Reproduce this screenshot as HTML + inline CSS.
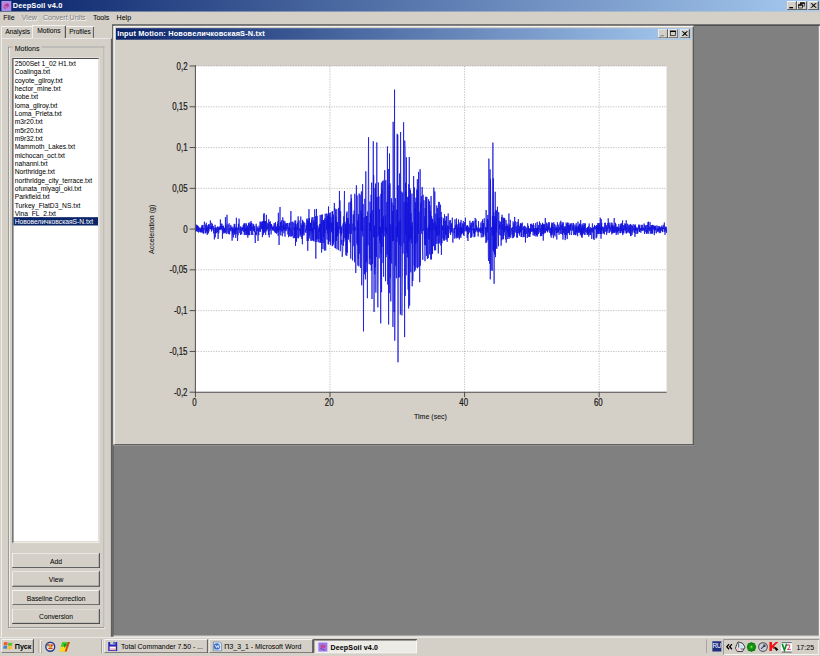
<!DOCTYPE html>
<html><head><meta charset="utf-8"><title>DeepSoil v4.0</title>
<style>
html,body{margin:0;padding:0;width:820px;height:656px;overflow:hidden;background:#d4d0c8}
#s{position:absolute;left:0;top:0;width:1280px;height:1024px;transform:scale(0.640625);transform-origin:0 0;background:#d4d0c8;font-family:"Liberation Sans",sans-serif;font-size:11px;color:#000;overflow:hidden;-webkit-text-stroke:0.05px}
.a{position:absolute}
svg text{font-family:"Liberation Sans",sans-serif}
.cb{width:16px;height:14px;background:#d4d0c8;box-shadow:inset -1px -1px #404040,inset 1px 1px #fff,inset -2px -2px #808080}
.cb svg{position:absolute;left:0;top:0}
.raised{background:#d4d0c8;box-shadow:inset -1px -1px #404040,inset 1px 1px #fff,inset -2px -2px #808080}
.sunk{box-shadow:inset 1px 1px #808080,inset -1px -1px #fff,inset 2px 2px #404040,inset -2px -2px #d4d0c8}
.menu{top:18px;height:19px;line-height:19px;white-space:nowrap}
.dis{color:#808080;text-shadow:1px 1px #fff}
.li{position:absolute;left:2px;right:2px;height:13px;line-height:14px;padding-left:2px;white-space:nowrap;font-size:11px}
.li span{display:inline-block;transform:scaleX(0.95);transform-origin:0 0}
.sel{background:#0a246a;color:#fff}
.btn{left:19px;width:137px;height:24px;line-height:27px;text-align:center;font-size:10.5px}
.tb{height:22px;line-height:22px;white-space:nowrap}
</style></head><body>
<div id="s">
<!-- main title bar -->
<div class="a" style="left:0;top:0;width:1280px;height:18px;background:linear-gradient(to right,#0a246a,#a6caf0)"></div>
<svg class="a" style="left:2px;top:1px" width="16" height="16" viewBox="0 0 16 16"><rect x="0" y="0" width="16" height="16" fill="#a89cf4"/><rect x="1" y="1" width="14" height="14" fill="#b48ce8"/><ellipse cx="8" cy="8" rx="5" ry="4" fill="#c860b8" transform="rotate(-30 8 8)"/><ellipse cx="9" cy="7" rx="2.5" ry="2" fill="#a04098"/><path d="M3.5 10.5 L7 13" stroke="#9050a8" stroke-width="1.5"/></svg>
<div class="a" style="left:20px;top:0;height:18px;line-height:18px;color:#fff;font-weight:bold;font-size:11.5px;letter-spacing:0.2px">DeepSoil v4.0</div>
<div class="a cb" style="left:1228px;top:2px"><svg width="16" height="14"><rect x="4" y="9" width="6" height="2" fill="#000"/></svg></div><div class="a cb" style="left:1244px;top:2px"><svg width="16" height="14"><rect x="5.5" y="2.5" width="6" height="5" fill="none" stroke="#000"/><rect x="5" y="2" width="7" height="2" fill="#000"/><rect x="2.5" y="5.5" width="6" height="5" fill="#d4d0c8" stroke="#000"/><rect x="2" y="5" width="7" height="2" fill="#000"/></svg></div><div class="a cb" style="left:1262px;top:2px"><svg width="16" height="14"><path d="M4 3 L11 10 M11 3 L4 10 M5 3 L12 10 M12 3 L5 10" stroke="#000" stroke-width="1.4"/></svg></div>
<!-- menu -->
<div class="a menu" style="left:5px">File</div>
<div class="a menu dis" style="left:34px">View</div>
<div class="a menu dis" style="left:67px">Convert Units</div>
<div class="a menu" style="left:145px">Tools</div>
<div class="a menu" style="left:182px">Help</div>

<!-- left tab control -->
<div class="a" style="left:2px;top:59px;width:173px;height:940px;box-shadow:inset 1px 1px #fff,inset -1px -1px #404040,inset -2px -2px #808080"></div>
<div class="a" style="left:2px;top:41px;width:49px;height:18px;box-shadow:inset 1px 1px #fff"></div>
<div class="a" style="left:8px;top:40px;height:18px;line-height:19px;font-size:10.5px">Analysis</div>
<div class="a" style="left:102px;top:41px;width:45px;height:18px;box-shadow:inset 1px 1px #fff,inset -1px 0 #404040,inset -2px 0 #808080"></div>
<div class="a" style="left:108px;top:40px;height:18px;line-height:19px;font-size:10.5px;transform:scaleX(0.96);transform-origin:0 0">Profiles</div>
<div class="a" style="left:50px;top:39px;width:53px;height:21px;background:#d4d0c8;box-shadow:inset 1px 1px #fff,inset -1px 0 #404040,inset -2px 0 #808080"></div>
<div class="a" style="left:58px;top:39px;height:18px;line-height:19px;font-size:10.5px">Motions</div>

<!-- group box -->
<div class="a" style="left:13px;top:73px;width:148px;height:905px;border:1px solid #808080;box-shadow:inset 1px 1px #fff,1px 1px #fff"></div>
<div class="a" style="left:20px;top:67px;height:14px;line-height:16px;padding:0 3px;background:#d4d0c8">Motions</div>

<!-- listbox -->
<div class="a" style="left:19px;top:90px;width:136px;height:757px;background:#fff">
<div class="li" style="top:2px"><span>2500Set 1_02 H1.txt</span></div>
<div class="li" style="top:15px"><span>Coalinga.txt</span></div>
<div class="li" style="top:28px"><span>coyote_gilroy.txt</span></div>
<div class="li" style="top:41px"><span>hector_mine.txt</span></div>
<div class="li" style="top:54px"><span>kobe.txt</span></div>
<div class="li" style="top:67px"><span>loma_gilroy.txt</span></div>
<div class="li" style="top:80px"><span>Loma_Prieta.txt</span></div>
<div class="li" style="top:93px"><span>m3r20.txt</span></div>
<div class="li" style="top:106px"><span>m5r20.txt</span></div>
<div class="li" style="top:119px"><span>m9r32.txt</span></div>
<div class="li" style="top:132px"><span>Mammoth_Lakes.txt</span></div>
<div class="li" style="top:145px"><span>michocan_oct.txt</span></div>
<div class="li" style="top:158px"><span>nahanni.txt</span></div>
<div class="li" style="top:171px"><span>Northridge.txt</span></div>
<div class="li" style="top:184px"><span>northridge_city_terrace.txt</span></div>
<div class="li" style="top:197px"><span>ofunata_miyagi_oki.txt</span></div>
<div class="li" style="top:210px"><span>Parkfield.txt</span></div>
<div class="li" style="top:223px"><span>Turkey_FlatD3_NS.txt</span></div>
<div class="li" style="top:236px"><span>Vina_FL_2.txt</span></div>
<div class="li sel" style="top:249px"><span>НововеличковскаяS-N.txt</span></div>
<div class="a sunk" style="left:0;top:0;right:0;bottom:0"></div>
</div>

<div class="a btn raised" style="top:863px">Add</div>
<div class="a btn raised" style="top:892px">View</div>
<div class="a btn raised" style="top:921px">Baseline Correction</div>
<div class="a btn raised" style="top:950px">Conversion</div>

<!-- MDI client -->
<div class="a" style="left:175px;top:38px;width:1105px;height:956px;background:#808080;box-shadow:inset 1px 1px #808080,inset 2px 2px #404040,inset -1px -1px #fff,inset -2px -2px #d4d0c8"></div>

<!-- child window -->
<div class="a" style="left:177px;top:40px;width:906px;height:655px;background:#d4d0c8;box-shadow:inset 1px 1px #d4d0c8,inset -1px -1px #404040,inset 2px 2px #fff,inset -2px -2px #808080"></div>
<div class="a" style="left:181px;top:44px;width:898px;height:18px;background:linear-gradient(to right,#0a246a,#a6caf0)"></div>
<div class="a" style="left:183px;top:43px;height:18px;line-height:18px;color:#fff;font-weight:bold;font-size:11.5px;letter-spacing:0.25px">Input Motion: НововеличковскаяS-N.txt</div>
<div class="a cb" style="left:1027px;top:46px"><svg width="16" height="14"><rect x="5" y="10" width="6" height="2" fill="#fff"/><rect x="4" y="9" width="6" height="2" fill="#808080"/></svg></div><div class="a cb" style="left:1043px;top:46px"><svg width="16" height="14"><rect x="3.5" y="2.5" width="8" height="7" fill="none" stroke="#000" stroke-width="1"/><rect x="3" y="2" width="9" height="2" fill="#000"/></svg></div><div class="a cb" style="left:1061px;top:46px"><svg width="16" height="14"><path d="M4 3 L11 10 M11 3 L4 10 M5 3 L12 10 M12 3 L5 10" stroke="#000" stroke-width="1.4"/></svg></div>
<svg class="a" style="left:0;top:0" width="1280" height="1024" viewBox="0 0 1280 1024">
<rect x="305.0" y="103.0" width="735.5" height="509.2" fill="#fff"/>
<line x1="305.0" y1="103.0" x2="1040.5" y2="103.0" stroke="#a0a0a0" stroke-width="1" stroke-dasharray="2 2"/>
<line x1="305.0" y1="166.7" x2="1040.5" y2="166.7" stroke="#a0a0a0" stroke-width="1" stroke-dasharray="2 2"/>
<line x1="305.0" y1="230.3" x2="1040.5" y2="230.3" stroke="#a0a0a0" stroke-width="1" stroke-dasharray="2 2"/>
<line x1="305.0" y1="294.0" x2="1040.5" y2="294.0" stroke="#a0a0a0" stroke-width="1" stroke-dasharray="2 2"/>
<line x1="305.0" y1="357.6" x2="1040.5" y2="357.6" stroke="#a0a0a0" stroke-width="1" stroke-dasharray="2 2"/>
<line x1="305.0" y1="421.2" x2="1040.5" y2="421.2" stroke="#a0a0a0" stroke-width="1" stroke-dasharray="2 2"/>
<line x1="305.0" y1="484.9" x2="1040.5" y2="484.9" stroke="#a0a0a0" stroke-width="1" stroke-dasharray="2 2"/>
<line x1="305.0" y1="548.6" x2="1040.5" y2="548.6" stroke="#a0a0a0" stroke-width="1" stroke-dasharray="2 2"/>
<line x1="305.0" y1="612.2" x2="1040.5" y2="612.2" stroke="#a0a0a0" stroke-width="1" stroke-dasharray="2 2"/>
<line x1="515.1" y1="103.0" x2="515.1" y2="612.2" stroke="#a0a0a0" stroke-width="1" stroke-dasharray="2 2"/>
<line x1="725.2" y1="103.0" x2="725.2" y2="612.2" stroke="#a0a0a0" stroke-width="1" stroke-dasharray="2 2"/>
<line x1="935.3" y1="103.0" x2="935.3" y2="612.2" stroke="#a0a0a0" stroke-width="1" stroke-dasharray="2 2"/>
<path d="M305.0 357.5 L305.4 361.1 L305.9 350.2 L306.4 360.8 L306.9 351.9 L307.5 360.4 L307.7 352.1 L308.0 361.9 L308.5 352.0 L308.9 358.6 L309.4 357.8 L309.7 353.3 L310.1 363.0 L310.4 355.3 L310.7 362.1 L311.3 355.9 L311.8 359.1 L312.1 355.1 L312.5 362.0 L312.8 361.6 L313.1 356.8 L313.5 362.9 L314.0 357.3 L314.3 362.5 L314.5 354.1 L314.9 362.0 L315.3 351.2 L315.6 363.0 L315.9 363.0 L316.2 353.1 L316.5 358.2 L316.8 351.1 L317.2 364.5 L317.4 361.4 L317.8 356.0 L318.0 364.4 L318.4 362.1 L319.0 346.1 L319.3 350.8 L319.8 358.6 L320.3 356.6 L320.6 364.3 L321.1 350.6 L321.4 363.7 L322.0 347.8 L322.5 361.0 L323.1 352.3 L323.5 366.8 L323.7 355.3 L324.2 364.1 L324.7 351.6 L325.2 364.2 L325.6 350.2 L326.1 361.3 L326.7 350.1 L327.1 356.9 L327.6 357.7 L327.9 353.4 L328.4 344.2 L328.9 357.7 L329.2 354.1 L329.5 357.4 L329.8 352.9 L330.1 361.4 L330.6 347.8 L331.1 357.5 L331.6 349.7 L331.9 357.9 L332.3 357.5 L332.6 359.8 L333.1 353.0 L333.5 364.2 L334.0 356.1 L334.6 373.7 L335.2 364.3 L335.7 350.9 L336.0 370.4 L336.5 355.0 L336.8 364.3 L337.1 357.8 L337.6 355.6 L338.2 363.8 L338.8 354.7 L339.3 362.1 L339.9 353.4 L340.5 373.0 L340.9 354.5 L341.4 364.0 L341.9 361.0 L342.3 354.8 L342.6 358.5 L343.1 353.4 L343.7 358.2 L344.0 342.6 L344.4 357.0 L344.6 353.0 L345.0 359.3 L345.5 349.2 L345.9 357.6 L346.5 349.2 L346.9 354.6 L347.2 372.5 L347.7 352.8 L348.1 361.4 L348.3 362.4 L348.9 352.3 L349.3 364.6 L349.6 355.3 L350.1 363.3 L350.4 356.3 L351.0 363.6 L351.3 356.6 L351.6 357.6 L351.9 339.0 L352.2 362.8 L352.7 350.6 L353.2 365.3 L353.8 351.9 L354.3 335.3 L354.9 349.3 L355.4 362.9 L355.8 364.4 L356.1 350.4 L356.5 360.7 L357.1 365.6 L357.7 348.6 L358.0 357.6 L358.4 365.7 L358.8 356.6 L359.4 359.9 L360.0 354.0 L360.3 351.1 L360.5 361.1 L361.0 353.7 L361.4 357.7 L361.8 355.8 L362.3 375.7 L362.8 356.6 L363.2 366.1 L363.5 353.8 L364.2 370.8 L364.4 356.6 L364.7 363.7 L365.1 361.2 L365.6 349.4 L366.1 366.3 L366.6 350.1 L367.1 362.9 L367.4 355.6 L368.0 371.3 L368.4 354.2 L368.6 365.4 L369.0 339.9 L369.4 360.2 L369.9 355.6 L370.3 363.9 L370.9 376.1 L371.4 355.2 L371.7 367.0 L372.1 349.3 L372.6 358.8 L373.1 341.3 L373.6 349.2 L374.1 363.5 L374.6 362.0 L375.0 354.9 L375.4 366.8 L375.8 353.3 L376.3 358.3 L376.9 356.6 L377.3 365.9 L377.8 354.6 L378.1 360.5 L378.7 355.1 L379.1 358.6 L379.7 351.1 L380.3 362.0 L380.7 348.9 L381.3 367.0 L381.8 348.9 L382.3 364.9 L382.7 348.8 L383.1 360.3 L383.5 357.4 L383.7 366.9 L384.0 355.5 L384.3 359.8 L384.6 348.7 L384.9 367.0 L385.4 353.9 L385.8 365.6 L386.1 359.9 L386.4 352.1 L386.8 371.0 L387.3 355.5 L387.7 367.0 L387.9 348.4 L388.5 366.9 L389.0 347.1 L389.2 366.9 L389.7 366.9 L390.1 350.2 L390.7 359.9 L390.9 348.7 L391.2 360.3 L391.6 345.0 L392.0 345.2 L392.4 366.7 L392.9 347.9 L393.3 358.0 L393.8 353.5 L394.2 363.6 L394.6 366.9 L394.9 349.3 L395.5 360.4 L396.0 350.3 L396.4 359.6 L396.7 355.5 L397.1 362.2 L397.7 352.6 L397.9 368.6 L398.5 379.3 L398.9 361.7 L399.3 366.2 L399.9 349.3 L400.2 366.3 L400.7 367.2 L401.0 353.1 L401.4 360.6 L402.0 357.6 L402.3 355.2 L402.8 376.2 L403.3 356.0 L403.7 363.8 L404.0 366.8 L404.3 352.3 L404.8 361.7 L405.3 355.9 L405.5 357.3 L405.8 346.2 L406.3 349.2 L406.6 361.7 L407.1 346.0 L407.6 356.8 L408.0 347.9 L408.6 357.6 L409.0 345.7 L409.6 370.2 L410.0 345.6 L410.4 360.2 L410.8 345.5 L411.1 366.7 L411.7 334.6 L412.0 363.3 L412.3 332.6 L412.5 363.0 L413.1 345.3 L413.5 352.5 L414.0 361.2 L414.4 345.1 L414.7 366.8 L415.1 345.1 L415.6 357.0 L415.8 335.3 L416.4 361.1 L417.0 353.0 L417.5 357.9 L417.8 347.9 L418.4 352.4 L418.8 349.9 L419.0 366.9 L419.5 342.3 L419.8 357.7 L420.3 370.5 L420.9 346.6 L421.5 360.1 L421.9 345.5 L422.4 356.8 L422.9 349.7 L423.2 366.0 L423.6 349.6 L424.2 356.2 L424.6 351.9 L425.1 359.7 L425.3 354.7 L425.7 359.0 L426.2 354.8 L426.5 358.2 L427.0 353.4 L427.5 360.7 L427.8 348.6 L428.3 360.4 L428.9 361.9 L429.4 348.0 L429.7 363.7 L430.0 346.8 L430.6 362.3 L430.9 353.7 L431.5 364.9 L432.1 353.6 L432.4 363.7 L433.0 349.3 L433.5 360.7 L433.9 345.4 L434.2 368.0 L434.5 332.1 L434.8 361.9 L435.2 356.8 L435.6 382.4 L435.9 368.2 L436.5 353.2 L436.7 358.8 L437.1 323.1 L437.3 358.9 L437.8 346.6 L438.2 367.3 L438.7 348.6 L439.1 361.6 L439.4 344.0 L439.7 354.3 L440.3 353.3 L440.7 368.8 L441.4 339.2 L441.8 360.7 L442.2 350.8 L442.5 357.5 L442.8 344.1 L443.2 364.1 L443.7 354.0 L444.1 358.5 L444.6 345.0 L444.9 369.4 L445.2 347.9 L445.7 359.4 L446.3 350.1 L446.7 360.9 L447.3 348.5 L447.6 357.3 L448.2 356.9 L448.5 357.4 L448.9 348.0 L449.4 366.1 L450.0 353.9 L450.6 370.2 L451.2 348.4 L451.7 361.0 L452.2 347.6 L452.5 368.2 L452.8 355.7 L453.0 369.3 L453.6 344.9 L454.1 329.4 L454.6 351.2 L455.1 369.1 L455.6 346.6 L456.2 368.2 L456.5 368.0 L457.1 345.9 L457.5 370.9 L458.2 371.9 L458.7 347.7 L458.9 358.8 L459.5 354.9 L459.9 371.3 L460.4 344.2 L460.7 371.4 L461.1 348.7 L461.3 383.8 L461.6 344.2 L462.0 366.6 L462.2 349.7 L462.9 377.3 L463.4 353.7 L463.9 371.7 L464.5 347.4 L465.0 359.1 L465.4 337.8 L465.9 371.9 L466.4 349.4 L466.8 344.1 L467.1 360.0 L467.6 356.8 L467.9 368.2 L468.4 369.6 L468.7 357.7 L469.0 365.6 L469.5 338.0 L469.7 367.6 L470.1 350.9 L470.7 351.3 L471.0 372.8 L471.6 348.3 L472.0 381.3 L472.3 343.1 L472.7 368.2 L473.1 345.2 L473.5 364.3 L474.0 347.4 L474.3 367.1 L474.7 367.4 L475.1 358.8 L475.5 347.6 L476.0 349.2 L476.3 357.5 L476.7 362.5 L477.2 357.8 L477.6 363.5 L478.0 351.8 L478.5 359.2 L478.9 341.4 L479.4 376.1 L479.9 344.1 L480.4 391.5 L480.8 341.0 L481.1 376.2 L481.5 345.7 L481.8 360.8 L482.3 326.4 L482.7 372.3 L483.1 340.3 L483.5 367.5 L483.9 347.3 L484.3 360.7 L484.8 348.1 L485.1 375.7 L485.6 348.7 L486.1 360.7 L486.3 342.8 L486.7 376.0 L487.0 339.3 L487.3 363.9 L487.8 355.8 L488.1 374.7 L488.6 338.8 L488.8 366.3 L489.1 376.5 L489.7 344.2 L490.0 376.0 L490.3 347.4 L490.7 358.1 L491.0 345.1 L491.3 326.7 L491.6 354.8 L492.1 377.9 L492.6 337.7 L493.0 403.8 L493.4 344.6 L493.7 374.3 L494.0 326.1 L494.3 349.7 L494.6 377.5 L495.0 337.0 L495.2 371.4 L495.7 373.4 L496.0 351.7 L496.5 354.0 L496.8 377.9 L497.2 378.0 L497.6 356.4 L497.9 372.6 L498.3 354.2 L498.7 362.1 L499.1 349.7 L499.3 379.0 L499.8 335.7 L500.3 378.6 L500.7 349.3 L501.2 374.9 L501.6 335.2 L502.0 394.1 L502.3 344.2 L502.8 379.1 L503.2 334.8 L503.5 344.4 L503.7 358.5 L504.1 388.7 L504.7 343.4 L505.0 370.1 L505.3 343.9 L505.6 379.3 L505.8 346.3 L506.4 391.1 L506.8 341.3 L507.1 364.1 L507.7 333.7 L508.0 375.1 L508.4 390.9 L508.7 368.8 L509.1 340.9 L509.6 358.9 L509.9 333.2 L510.3 370.4 L510.7 374.1 L511.1 337.0 L511.4 364.6 L511.9 334.0 L512.3 381.3 L512.8 322.3 L513.1 381.5 L513.3 336.9 L513.8 376.1 L514.2 333.0 L514.5 357.2 L514.9 346.8 L515.2 377.4 L515.6 331.8 L516.0 382.5 L516.4 373.7 L516.6 338.7 L517.1 362.7 L517.7 347.7 L518.0 360.2 L518.4 330.2 L518.7 384.3 L519.2 329.7 L519.5 383.2 L520.0 346.7 L520.2 381.4 L520.6 335.1 L521.0 377.9 L521.5 328.4 L521.9 316.7 L522.4 328.4 L522.6 325.0 L523.0 387.1 L523.6 327.3 L523.8 387.6 L524.3 338.4 L524.5 375.2 L525.0 345.7 L525.3 375.8 L525.7 326.5 L526.0 389.0 L526.3 351.9 L526.6 368.8 L527.0 346.6 L527.3 367.3 L527.8 355.1 L528.1 390.4 L528.6 324.6 L529.0 364.0 L529.5 333.3 L529.9 298.1 L530.4 357.7 L530.6 312.9 L531.2 392.1 L531.7 329.9 L532.2 367.3 L532.5 353.0 L532.7 365.1 L533.0 355.4 L533.4 382.0 L533.7 374.5 L534.2 400.9 L534.6 394.8 L535.1 391.4 L535.4 350.6 L535.7 363.7 L535.9 347.9 L536.2 383.5 L536.6 337.8 L536.8 377.3 L537.2 326.5 L537.7 298.1 L538.1 371.5 L538.6 346.3 L539.2 373.8 L539.6 349.5 L539.9 398.4 L540.3 357.3 L540.6 393.3 L540.9 333.0 L541.3 399.3 L541.7 330.0 L542.1 394.7 L542.7 340.5 L543.0 370.4 L543.5 340.9 L544.0 373.9 L544.6 316.2 L545.0 365.0 L545.4 355.4 L545.7 351.4 L546.2 349.2 L546.5 378.4 L546.8 314.8 L547.3 366.0 L547.5 403.8 L548.0 303.4 L548.4 365.0 L548.7 309.9 L549.2 332.9 L549.7 336.7 L550.3 406.5 L550.9 349.2 L551.3 359.9 L551.7 334.8 L552.1 372.7 L552.3 384.2 L552.8 328.7 L553.1 384.8 L553.4 409.4 L553.8 302.5 L554.2 360.0 L554.4 354.1 L554.8 393.6 L555.3 426.1 L555.7 413.1 L555.9 312.0 L556.3 289.2 L556.7 314.0 L557.2 380.2 L557.4 305.1 L557.8 382.7 L558.3 343.8 L558.6 414.3 L559.0 347.0 L559.3 404.4 L559.7 334.5 L560.2 415.8 L560.6 302.1 L561.0 370.6 L561.5 396.0 L562.0 303.8 L562.5 307.4 L562.9 418.3 L563.5 328.7 L563.8 360.3 L564.1 298.8 L564.6 445.4 L565.1 333.6 L565.6 361.1 L566.0 287.5 L566.3 368.9 L566.9 318.6 L567.4 517.3 L567.9 360.0 L568.5 339.3 L569.0 428.1 L569.4 310.4 L569.9 319.1 L570.4 436.1 L571.0 267.4 L571.5 424.8 L572.0 337.2 L572.3 409.4 L572.8 337.3 L573.1 378.6 L573.5 465.5 L574.0 330.2 L574.5 383.0 L575.1 239.9 L575.3 214.2 L575.8 349.6 L576.4 412.4 L576.7 347.8 L577.2 403.8 L577.6 314.8 L577.9 361.2 L578.3 332.6 L578.7 413.7 L579.3 304.1 L579.7 422.4 L580.1 285.1 L580.7 466.7 L581.0 328.0 L581.5 412.2 L582.0 398.8 L582.7 220.6 L582.9 370.1 L583.3 273.6 L583.9 487.0 L584.4 352.1 L585.0 428.3 L585.3 293.3 L585.8 417.1 L586.2 286.5 L586.7 456.8 L587.3 308.1 L587.7 400.9 L588.2 222.3 L588.5 370.1 L588.8 307.3 L589.4 447.3 L589.8 479.8 L590.4 428.2 L590.6 284.8 L591.2 367.8 L591.6 306.6 L591.8 403.2 L592.5 326.7 L592.7 375.3 L593.2 353.6 L593.5 379.7 L593.7 354.6 L594.3 504.8 L594.6 302.7 L594.8 396.0 L595.4 285.2 L595.6 456.1 L596.1 295.1 L596.5 385.3 L596.9 282.4 L597.2 364.0 L597.6 342.5 L597.9 410.7 L598.5 337.8 L598.8 432.0 L599.1 281.8 L599.7 369.0 L600.0 281.6 L600.6 265.7 L601.1 360.9 L601.6 336.4 L601.9 438.9 L602.2 281.2 L602.7 401.4 L603.0 354.5 L603.4 365.8 L603.9 315.3 L604.4 397.3 L604.8 228.5 L605.2 444.1 L605.8 333.5 L606.1 263.8 L606.6 506.5 L607.2 288.5 L607.8 457.6 L608.0 239.7 L608.3 405.3 L608.8 286.1 L609.3 433.7 L609.8 350.1 L610.0 470.5 L610.5 369.9 L611.0 309.5 L611.4 411.3 L612.0 316.3 L612.6 376.7 L612.9 329.5 L613.4 510.3 L613.7 190.1 L614.1 375.8 L614.7 320.0 L615.1 487.1 L615.5 385.3 L615.9 139.9 L616.2 531.7 L616.8 435.0 L617.1 383.4 L617.6 309.2 L617.8 414.9 L618.4 353.2 L618.8 434.4 L619.2 327.3 L619.6 377.6 L620.0 208.9 L620.4 370.0 L620.9 210.6 L621.3 565.5 L621.7 289.4 L622.2 433.4 L622.7 346.6 L623.2 381.9 L623.8 270.8 L624.1 432.8 L624.6 343.1 L625.0 491.0 L625.3 206.0 L625.9 384.6 L626.3 298.9 L626.8 370.5 L627.4 492.3 L628.0 431.2 L628.2 431.5 L628.5 300.6 L629.1 395.7 L629.6 299.5 L630.0 190.9 L630.5 379.7 L630.8 315.9 L631.2 375.6 L631.6 526.2 L631.8 219.5 L632.3 236.3 L632.7 461.8 L633.0 285.5 L633.5 366.3 L633.8 299.6 L634.1 429.7 L634.4 245.5 L635.0 394.7 L635.5 316.4 L635.9 401.8 L636.4 307.8 L636.7 324.3 L637.1 452.0 L637.3 306.7 L637.9 481.6 L638.1 287.5 L638.4 377.3 L638.9 245.0 L639.4 477.0 L639.9 293.9 L640.3 373.2 L640.7 297.2 L641.2 425.1 L641.6 332.7 L641.8 373.8 L642.2 351.4 L642.7 379.9 L643.0 302.2 L643.4 446.9 L643.7 346.9 L644.1 372.6 L644.4 438.6 L644.7 423.4 L645.3 306.9 L645.7 274.7 L646.1 345.0 L646.6 414.3 L646.9 292.6 L647.1 424.0 L647.7 324.7 L648.2 422.0 L648.8 315.4 L649.0 380.9 L649.3 308.5 L649.6 417.7 L650.0 383.5 L650.6 295.8 L650.9 340.8 L651.3 377.1 L651.5 279.7 L651.8 418.8 L652.4 297.3 L652.9 365.3 L653.4 268.3 L653.8 416.9 L654.1 330.3 L654.7 367.5 L655.1 440.5 L655.4 406.0 L655.8 264.1 L656.3 414.5 L656.8 316.6 L657.2 360.4 L657.7 306.2 L658.0 353.6 L658.5 365.2 L659.0 291.9 L659.4 384.1 L660.0 405.5 L660.5 304.1 L660.7 359.9 L661.3 360.3 L661.8 312.7 L662.4 359.8 L662.8 382.1 L663.1 337.9 L663.4 407.8 L663.7 324.6 L664.3 383.1 L664.6 307.0 L665.0 372.0 L665.3 308.0 L665.8 399.3 L666.3 307.4 L667.0 404.4 L667.4 403.9 L667.8 355.3 L668.0 381.9 L668.5 402.9 L669.0 311.0 L669.5 373.9 L669.7 351.0 L670.1 373.5 L670.4 314.1 L670.6 397.1 L671.1 320.6 L671.5 361.0 L671.8 329.6 L672.2 399.2 L672.5 405.1 L672.9 306.0 L673.1 337.4 L673.4 404.8 L673.8 337.1 L674.3 396.7 L674.8 341.5 L675.2 395.8 L675.5 342.6 L675.9 358.7 L676.4 347.9 L676.8 384.2 L677.1 292.8 L677.3 294.1 L677.6 327.8 L677.9 349.3 L678.3 390.7 L678.7 298.9 L679.0 360.4 L679.5 346.4 L680.0 390.7 L680.3 333.6 L680.7 380.4 L681.1 351.2 L681.6 369.1 L681.8 320.8 L682.3 380.3 L682.8 324.6 L683.1 367.5 L683.4 339.2 L683.9 364.4 L684.2 395.6 L684.5 359.4 L684.8 315.1 L685.3 380.3 L685.7 315.4 L685.9 366.6 L686.4 340.8 L686.6 379.3 L687.1 329.9 L687.4 324.4 L687.7 319.5 L688.2 383.2 L688.7 330.7 L689.0 397.9 L689.5 338.6 L689.8 379.7 L690.3 351.9 L690.7 359.0 L691.1 353.4 L691.3 371.9 L691.8 371.6 L692.2 340.7 L692.6 375.3 L693.0 344.7 L693.4 375.8 L693.8 334.4 L694.2 350.6 L694.7 373.9 L695.1 354.1 L695.4 365.3 L695.6 344.2 L696.0 367.3 L696.4 337.4 L696.7 374.2 L697.1 353.7 L697.4 337.7 L698.0 377.4 L698.7 352.0 L699.2 371.4 L699.6 333.2 L700.1 371.2 L700.6 353.1 L701.0 357.9 L701.6 348.1 L702.2 344.0 L702.5 363.9 L702.9 343.8 L703.3 366.8 L703.7 364.6 L704.1 350.2 L704.7 361.3 L705.1 348.4 L705.5 362.8 L706.0 339.8 L706.6 372.7 L706.9 378.8 L707.5 369.8 L707.9 363.5 L708.3 360.5 L708.6 356.1 L708.9 363.8 L709.4 355.6 L709.7 372.3 L710.2 342.4 L710.5 348.7 L710.8 357.5 L711.4 351.3 L711.6 369.6 L712.0 372.0 L712.5 340.9 L712.9 369.3 L713.2 349.5 L713.5 371.8 L713.8 356.3 L714.3 370.6 L714.8 351.8 L715.1 367.8 L715.7 342.5 L716.3 371.5 L716.5 349.1 L717.0 373.8 L717.5 355.6 L717.8 361.8 L718.3 346.8 L718.8 368.9 L719.1 348.1 L719.4 371.3 L719.7 343.3 L719.9 364.5 L720.2 354.1 L720.7 366.0 L721.2 356.3 L721.7 364.2 L722.2 348.8 L722.6 362.5 L723.2 345.0 L723.4 366.4 L723.9 350.6 L724.3 368.3 L724.6 354.0 L725.2 346.8 L725.7 361.4 L726.0 356.7 L726.5 339.8 L726.9 358.2 L727.5 355.8 L727.8 361.1 L728.3 352.2 L728.5 360.8 L729.1 352.9 L729.3 371.5 L729.9 351.5 L730.4 376.2 L730.9 353.6 L731.3 365.6 L731.8 355.5 L732.2 359.8 L732.5 356.4 L733.0 363.0 L733.5 344.6 L734.0 358.7 L734.5 352.1 L734.9 371.4 L735.2 347.9 L735.7 370.4 L736.3 347.7 L736.7 369.3 L737.1 357.3 L737.5 359.4 L737.8 344.9 L738.4 353.7 L738.8 348.2 L739.2 364.4 L739.8 344.9 L740.1 370.3 L740.4 356.1 L740.7 366.6 L741.0 357.6 L741.4 369.4 L741.7 340.2 L742.1 345.0 L742.7 362.6 L743.1 342.5 L743.5 360.3 L743.9 352.0 L744.4 358.5 L745.0 356.1 L745.6 362.3 L746.1 355.0 L746.4 369.1 L746.9 345.1 L747.4 362.7 L747.9 357.9 L748.3 360.2 L748.6 356.5 L749.2 361.7 L749.8 355.1 L750.2 363.8 L750.7 347.6 L751.2 370.6 L751.7 356.4 L752.0 360.3 L752.5 345.1 L752.9 364.0 L753.4 342.4 L753.7 370.4 L754.0 351.6 L754.5 369.5 L754.9 348.0 L755.2 365.6 L755.5 363.2 L755.9 340.8 L756.4 353.9 L757.0 359.2 L757.5 368.8 L757.9 354.5 L758.5 379.3 L758.8 327.8 L759.2 346.7 L759.7 378.1 L760.0 355.0 L760.4 362.9 L760.9 341.9 L761.2 361.2 L761.5 335.6 L761.7 375.1 L762.0 343.5 L762.3 402.3 L762.8 407.4 L763.1 247.6 L763.7 344.4 L764.3 411.6 L764.6 369.3 L765.0 264.5 L765.3 436.0 L765.7 279.7 L766.1 333.6 L766.6 421.9 L766.8 370.3 L767.4 354.5 L767.9 365.2 L768.3 422.8 L768.7 337.0 L768.9 367.8 L769.4 222.6 L769.7 389.6 L770.0 278.3 L770.6 392.7 L770.8 331.4 L771.3 443.0 L771.5 346.2 L771.8 396.1 L772.1 337.5 L772.7 397.6 L773.0 299.4 L773.4 401.4 L773.9 327.8 L774.3 387.6 L774.6 340.3 L774.9 361.3 L775.3 328.7 L775.6 388.4 L776.0 349.0 L776.5 322.7 L777.0 346.7 L777.4 362.5 L777.7 362.1 L778.1 384.4 L778.5 331.2 L779.0 366.4 L779.3 344.8 L779.8 357.1 L780.2 350.4 L780.5 358.1 L780.9 367.6 L781.4 346.1 L781.9 360.0 L782.1 383.5 L782.4 382.3 L783.0 338.9 L783.3 375.1 L783.7 335.1 L783.9 358.3 L784.5 350.9 L784.9 373.4 L785.2 339.6 L785.8 373.3 L786.3 340.8 L786.7 367.6 L787.0 340.1 L787.4 362.6 L787.9 340.9 L788.1 359.7 L788.5 352.8 L789.1 373.6 L789.4 373.8 L789.9 343.5 L790.2 378.9 L790.7 353.1 L791.0 357.9 L791.5 349.1 L791.8 363.0 L792.2 352.4 L792.6 373.2 L792.9 352.2 L793.5 369.9 L793.8 357.4 L794.1 368.0 L794.4 333.3 L794.7 372.8 L795.0 350.6 L795.4 369.7 L795.8 355.2 L796.1 367.4 L796.6 343.1 L797.0 357.2 L797.3 371.2 L797.8 362.0 L798.4 360.2 L798.7 355.9 L799.3 366.3 L799.8 354.5 L800.3 371.8 L800.9 345.6 L801.2 347.7 L801.5 371.0 L802.0 348.8 L802.5 349.1 L802.8 369.1 L803.4 338.6 L803.9 362.3 L804.5 345.6 L804.9 346.9 L805.5 363.6 L805.8 353.3 L806.3 367.3 L806.6 370.7 L807.0 346.4 L807.4 346.5 L807.9 370.9 L808.4 351.5 L808.9 363.6 L809.1 342.2 L809.7 360.9 L810.2 364.6 L810.6 356.6 L811.0 367.7 L811.3 352.7 L811.7 363.2 L812.2 349.0 L812.6 361.9 L813.1 348.0 L813.4 369.8 L814.0 349.8 L814.3 369.9 L814.9 353.4 L815.3 347.5 L815.7 359.0 L816.3 356.9 L816.6 370.3 L817.1 353.4 L817.7 369.9 L818.2 357.6 L818.6 364.9 L818.9 352.4 L819.5 369.9 L819.9 353.6 L820.2 378.7 L820.5 362.8 L821.1 354.9 L821.4 355.1 L822.0 365.1 L822.6 356.6 L823.1 371.5 L823.7 348.5 L824.3 361.3 L824.6 369.6 L824.8 352.6 L825.2 362.6 L825.7 357.0 L826.1 369.8 L826.7 356.6 L827.2 369.8 L827.7 356.7 L828.0 365.4 L828.3 349.6 L828.9 362.3 L829.5 349.3 L829.9 360.9 L830.5 357.9 L830.8 361.6 L831.1 351.0 L831.5 360.8 L831.9 358.8 L832.2 367.6 L832.6 348.5 L832.8 362.0 L833.3 351.3 L833.8 366.6 L834.1 356.5 L834.7 368.0 L835.2 356.1 L835.7 364.8 L836.2 348.4 L836.6 369.3 L837.0 355.7 L837.4 367.5 L837.7 356.0 L838.1 366.6 L838.6 346.4 L839.1 369.1 L839.5 355.5 L840.0 361.2 L840.3 351.2 L840.6 365.4 L841.2 356.9 L841.7 358.5 L842.1 345.7 L842.7 362.8 L843.3 348.4 L843.6 368.7 L844.2 356.6 L844.7 368.0 L845.2 351.3 L845.7 368.5 L846.2 350.2 L846.6 360.2 L846.8 347.8 L847.2 365.3 L847.6 349.2 L848.0 375.6 L848.3 350.2 L848.7 365.6 L849.0 351.8 L849.5 362.0 L850.0 350.0 L850.3 364.1 L850.8 359.4 L851.2 340.2 L851.5 363.2 L851.9 356.8 L852.5 354.9 L852.9 359.7 L853.4 347.5 L853.7 360.6 L854.1 349.2 L854.4 362.7 L854.9 355.9 L855.2 361.7 L855.6 352.4 L856.0 359.3 L856.3 347.3 L856.6 346.8 L857.0 357.9 L857.5 347.2 L858.1 363.6 L858.3 356.9 L858.9 359.4 L859.3 356.6 L859.7 367.2 L860.0 355.1 L860.4 370.9 L860.8 350.7 L861.0 365.7 L861.4 347.4 L861.9 367.1 L862.2 348.2 L862.8 363.3 L863.2 353.8 L863.8 371.6 L864.4 347.0 L864.9 358.2 L865.4 366.8 L865.8 349.6 L866.4 369.1 L866.8 355.4 L867.2 359.7 L867.8 351.7 L868.2 363.9 L868.8 355.3 L869.2 373.9 L869.4 354.9 L869.8 363.0 L870.1 347.0 L870.7 362.8 L871.2 356.5 L871.7 362.9 L872.1 350.7 L872.7 366.6 L873.3 354.3 L873.8 359.4 L874.2 347.2 L874.8 364.9 L875.4 344.6 L875.9 358.0 L876.2 357.1 L876.4 351.4 L876.9 365.4 L877.5 347.1 L878.0 366.5 L878.3 350.2 L878.8 373.9 L879.3 347.2 L879.6 363.6 L880.2 356.0 L880.6 361.1 L881.0 353.4 L881.4 366.5 L882.0 356.6 L882.2 374.8 L882.6 353.5 L882.9 371.0 L883.3 357.2 L883.8 347.4 L884.2 366.6 L884.8 349.7 L885.4 373.2 L885.9 347.6 L886.4 364.2 L886.9 347.6 L887.4 363.6 L888.0 351.1 L888.3 361.3 L888.5 351.6 L889.0 366.7 L889.4 357.6 L889.9 348.5 L890.2 358.4 L890.7 349.6 L891.0 359.9 L891.3 349.9 L891.6 366.8 L892.0 366.8 L892.6 361.6 L892.9 348.0 L893.4 359.9 L894.0 356.2 L894.4 351.4 L894.9 359.6 L895.2 348.2 L895.5 366.9 L895.8 353.2 L896.4 359.0 L896.9 366.0 L897.3 350.6 L897.8 353.7 L898.2 367.0 L898.7 353.4 L899.0 367.0 L899.4 348.4 L899.8 362.5 L900.2 352.9 L900.4 364.2 L900.9 355.6 L901.2 354.3 L901.7 368.7 L902.2 346.0 L902.7 361.1 L903.0 352.0 L903.5 363.4 L903.8 353.9 L904.1 363.2 L904.7 349.6 L904.9 361.9 L905.4 348.7 L905.9 367.1 L906.4 343.4 L906.7 364.2 L907.0 356.6 L907.3 367.1 L907.8 355.3 L908.1 370.4 L908.4 350.4 L908.7 370.9 L908.9 350.8 L909.2 366.9 L909.6 355.2 L910.0 360.9 L910.4 348.3 L910.7 364.7 L911.1 353.9 L911.4 360.0 L911.8 351.9 L912.1 366.5 L912.6 348.7 L913.2 366.9 L913.5 360.5 L913.8 348.9 L914.4 362.0 L914.9 356.6 L915.4 361.3 L915.8 363.5 L916.1 356.3 L916.6 366.8 L917.0 354.4 L917.4 365.5 L917.9 357.4 L918.3 365.8 L918.6 353.1 L919.0 369.4 L919.7 348.9 L920.0 362.6 L920.3 357.3 L920.8 366.6 L921.2 357.0 L921.5 354.4 L921.8 366.8 L922.2 360.1 L922.6 356.4 L922.9 361.5 L923.4 356.0 L923.7 373.0 L924.3 354.5 L924.8 348.7 L925.1 362.9 L925.4 356.6 L925.8 358.2 L926.0 356.0 L926.4 372.6 L926.8 354.1 L927.4 374.7 L928.0 351.1 L928.3 357.6 L928.9 356.0 L929.2 352.8 L929.8 357.8 L930.1 354.9 L930.5 372.1 L931.0 351.5 L931.6 370.6 L931.9 352.2 L932.2 365.2 L932.6 353.0 L932.9 358.3 L933.2 348.3 L933.5 365.6 L933.9 348.3 L934.5 363.8 L934.8 350.9 L935.2 365.4 L935.6 348.2 L935.9 359.8 L936.5 351.9 L936.8 365.3 L937.0 339.9 L937.4 365.2 L937.9 355.0 L938.2 372.6 L938.5 342.1 L938.9 365.1 L939.2 347.9 L939.6 360.9 L939.9 354.4 L940.2 357.3 L940.8 354.0 L941.3 364.9 L941.6 355.4 L942.2 363.8 L942.6 353.8 L943.0 354.2 L943.5 365.8 L944.1 347.8 L944.3 361.4 L944.9 347.8 L945.3 350.7 L945.9 362.0 L946.5 351.2 L946.9 366.6 L947.3 354.2 L947.8 360.2 L948.5 354.4 L948.8 348.2 L949.1 363.5 L949.4 340.9 L950.0 356.4 L950.6 356.7 L951.0 347.6 L951.4 363.5 L951.8 351.1 L952.2 354.0 L952.7 358.4 L953.1 354.8 L953.4 361.6 L953.8 347.6 L954.4 355.9 L954.7 352.5 L955.0 365.9 L955.4 347.6 L955.7 363.8 L956.1 351.2 L956.4 363.9 L956.7 350.9 L957.2 363.9 L957.7 353.8 L958.2 362.2 L958.8 340.4 L959.1 363.7 L959.5 353.3 L960.1 360.8 L960.6 347.7 L961.2 362.9 L961.4 349.6 L961.9 366.8 L962.4 354.2 L963.0 363.8 L963.5 354.0 L963.9 362.1 L964.3 354.0 L964.8 366.2 L965.3 355.9 L965.6 360.4 L966.0 349.6 L966.3 360.1 L966.6 355.4 L967.2 356.3 L967.9 363.9 L968.1 352.7 L968.4 363.9 L968.7 350.4 L969.0 350.0 L969.3 362.9 L969.5 348.2 L969.8 348.3 L970.4 360.1 L970.8 349.4 L971.4 364.0 L971.9 344.1 L972.1 367.0 L972.4 358.0 L972.8 351.6 L973.1 364.0 L973.4 356.3 L973.8 364.1 L974.2 351.4 L974.6 358.1 L974.9 356.7 L975.3 348.7 L975.7 360.9 L976.2 349.6 L976.6 359.4 L976.9 353.4 L977.2 364.2 L977.5 343.7 L978.0 364.3 L978.6 361.3 L979.2 349.1 L979.8 363.1 L980.4 350.5 L980.9 361.7 L981.5 353.4 L982.1 364.0 L982.4 351.0 L983.0 364.2 L983.4 357.7 L984.0 349.6 L984.3 368.6 L984.5 350.6 L985.0 368.3 L985.5 363.2 L986.1 351.1 L986.6 366.7 L986.8 361.5 L987.4 352.8 L987.9 362.9 L988.4 350.0 L988.9 359.5 L989.2 357.8 L989.7 356.7 L990.3 363.2 L990.7 351.0 L991.1 369.8 L991.7 350.3 L992.0 359.5 L992.2 352.8 L992.6 365.0 L993.2 355.2 L993.8 359.8 L994.1 356.8 L994.7 365.1 L994.9 355.3 L995.5 364.2 L996.1 359.0 L996.8 350.7 L997.4 359.5 L997.7 352.8 L998.1 362.2 L998.5 350.8 L998.8 361.9 L999.1 356.1 L999.7 359.1 L1000.2 356.4 L1000.5 363.4 L1001.0 351.0 L1001.5 358.7 L1001.8 354.8 L1002.3 360.7 L1002.8 351.0 L1003.3 360.0 L1003.8 357.1 L1004.1 359.0 L1004.5 355.6 L1005.0 360.0 L1005.4 348.9 L1006.0 365.2 L1006.6 351.2 L1007.2 362.4 L1007.6 353.3 L1008.2 358.5 L1008.7 351.2 L1008.9 364.8 L1009.5 357.9 L1009.9 365.1 L1010.3 351.2 L1010.8 362.8 L1011.4 346.7 L1012.0 364.8 L1012.3 346.1 L1012.7 359.2 L1013.1 357.4 L1013.6 354.5 L1014.2 360.8 L1014.7 346.6 L1015.1 365.0 L1015.3 354.2 L1016.0 358.6 L1016.5 351.2 L1016.7 364.1 L1017.3 353.1 L1017.7 364.7 L1018.1 351.2 L1018.4 364.6 L1018.8 351.2 L1019.4 351.2 L1020.0 358.3 L1020.4 352.0 L1020.9 361.6 L1021.4 367.0 L1021.7 353.0 L1022.0 363.6 L1022.4 352.3 L1022.9 358.4 L1023.3 352.8 L1023.5 359.5 L1023.9 356.5 L1024.5 364.2 L1025.1 360.5 L1025.4 351.8 L1025.8 360.0 L1026.3 357.4 L1026.8 362.2 L1027.1 353.1 L1027.5 361.2 L1027.7 356.1 L1028.1 360.0 L1028.7 353.1 L1029.1 363.9 L1029.7 353.3 L1030.2 360.7 L1030.4 361.6 L1030.7 355.5 L1031.2 363.6 L1031.6 354.0 L1031.8 357.5 L1032.4 354.6 L1032.7 360.1 L1033.0 352.2 L1033.4 355.6 L1034.0 361.6 L1034.4 355.0 L1034.7 362.3 L1035.1 351.0 L1035.4 351.1 L1035.7 357.6 L1036.2 354.5 L1036.7 357.5 L1037.0 347.4 L1037.6 362.1 L1037.8 357.0 L1038.1 366.6 L1038.3 359.8 L1038.9 353.9 L1039.2 360.0 L1039.8 354.1 L1040.2 355.9 L1040.5 363.3 L1040.5 357.5" fill="none" stroke="#1010dc" stroke-width="1.15" stroke-linejoin="miter"/>
<line x1="305.0" y1="102.0" x2="305.0" y2="613.2" stroke="#505050" stroke-width="1.6"/>
<line x1="305.0" y1="612.2" x2="1040.5" y2="612.2" stroke="#505050" stroke-width="1.6"/>
<line x1="296" y1="103.0" x2="305" y2="103.0" stroke="#404040" stroke-width="1.4"/>
<text transform="translate(292.7 108.5) scale(0.77 1)" text-anchor="end" font-size="16" fill="#181818" stroke="#181818" stroke-width="0.35">0,2</text>
<line x1="296" y1="166.7" x2="305" y2="166.7" stroke="#404040" stroke-width="1.4"/>
<text transform="translate(292.7 172.2) scale(0.77 1)" text-anchor="end" font-size="16" fill="#181818" stroke="#181818" stroke-width="0.35">0,15</text>
<line x1="296" y1="230.3" x2="305" y2="230.3" stroke="#404040" stroke-width="1.4"/>
<text transform="translate(292.7 235.8) scale(0.77 1)" text-anchor="end" font-size="16" fill="#181818" stroke="#181818" stroke-width="0.35">0,1</text>
<line x1="296" y1="294.0" x2="305" y2="294.0" stroke="#404040" stroke-width="1.4"/>
<text transform="translate(292.7 299.5) scale(0.77 1)" text-anchor="end" font-size="16" fill="#181818" stroke="#181818" stroke-width="0.35">0,05</text>
<line x1="296" y1="357.6" x2="305" y2="357.6" stroke="#404040" stroke-width="1.4"/>
<text transform="translate(292.7 363.1) scale(0.77 1)" text-anchor="end" font-size="16" fill="#181818" stroke="#181818" stroke-width="0.35">0</text>
<line x1="296" y1="421.2" x2="305" y2="421.2" stroke="#404040" stroke-width="1.4"/>
<text transform="translate(292.7 426.8) scale(0.77 1)" text-anchor="end" font-size="16" fill="#181818" stroke="#181818" stroke-width="0.35">-0,05</text>
<line x1="296" y1="484.9" x2="305" y2="484.9" stroke="#404040" stroke-width="1.4"/>
<text transform="translate(292.7 490.4) scale(0.77 1)" text-anchor="end" font-size="16" fill="#181818" stroke="#181818" stroke-width="0.35">-0,1</text>
<line x1="296" y1="548.6" x2="305" y2="548.6" stroke="#404040" stroke-width="1.4"/>
<text transform="translate(292.7 554.1) scale(0.77 1)" text-anchor="end" font-size="16" fill="#181818" stroke="#181818" stroke-width="0.35">-0,15</text>
<line x1="296" y1="612.2" x2="305" y2="612.2" stroke="#404040" stroke-width="1.4"/>
<text transform="translate(292.7 617.7) scale(0.77 1)" text-anchor="end" font-size="16" fill="#181818" stroke="#181818" stroke-width="0.35">-0,2</text>
<line x1="305.0" y1="612" x2="305.0" y2="620" stroke="#404040" stroke-width="1.4"/>
<text transform="translate(303.7 633.5) scale(0.77 1)" text-anchor="middle" font-size="16" fill="#181818" stroke="#181818" stroke-width="0.35">0</text>
<line x1="515.1" y1="612" x2="515.1" y2="620" stroke="#404040" stroke-width="1.4"/>
<text transform="translate(513.8 633.5) scale(0.77 1)" text-anchor="middle" font-size="16" fill="#181818" stroke="#181818" stroke-width="0.35">20</text>
<line x1="725.2" y1="612" x2="725.2" y2="620" stroke="#404040" stroke-width="1.4"/>
<text transform="translate(723.9 633.5) scale(0.77 1)" text-anchor="middle" font-size="16" fill="#181818" stroke="#181818" stroke-width="0.35">40</text>
<line x1="935.3" y1="612" x2="935.3" y2="620" stroke="#404040" stroke-width="1.4"/>
<text transform="translate(934.0 633.5) scale(0.77 1)" text-anchor="middle" font-size="16" fill="#181818" stroke="#181818" stroke-width="0.35">60</text>
<text x="672" y="654" text-anchor="middle" font-size="11" fill="#202020" stroke="#202020" stroke-width="0.15">Time (sec)</text>
<text x="0" y="0" transform="translate(240.5 358) rotate(-90)" text-anchor="middle" font-size="11" fill="#202020" stroke="#202020" stroke-width="0.15">Acceleration (g)</text>
</svg>

<!-- taskbar -->
<div class="a" style="left:0;top:994px;width:1280px;height:30px;background:#d4d0c8;box-shadow:inset 0 1px #d4d0c8,inset 0 2px #fff"></div>
<div class="a tb raised" style="left:2px;top:998px;width:51px;height:22px">
<svg class="a" style="left:3px;top:2px" width="16" height="16" viewBox="0 0 16 16"><path d="M1 3 Q4 1.5 7 3 L6.3 7.5 Q3.5 6 0.5 7.5Z" fill="#f05a28"/><path d="M8 3 Q11 4.5 14.5 3 L13.8 7.5 Q10.5 9 7.2 7.5Z" fill="#60c030"/><path d="M0.4 8.5 Q3.5 7 6.2 8.5 L5.5 13 Q2.5 11.5 -0.3 13Z" fill="#3a80e0"/><path d="M7.1 8.5 Q10.5 10 13.7 8.5 L13 13 Q9.8 14.5 6.4 13Z" fill="#f8c020"/></svg>
<span style="position:absolute;left:21px;top:0;font-weight:bold;font-size:12.5px;line-height:23px;transform:scaleX(0.9);transform-origin:0 0">Пуск</span></div>
<div class="a" style="left:59px;top:998px;width:2px;height:22px;box-shadow:inset 1px 0 #808080,inset -1px 0 #fff"></div>
<div class="a" style="left:63px;top:999px;width:3px;height:20px;box-shadow:inset 1px 1px #fff,inset -1px -1px #808080"></div>
<svg class="a" style="left:70px;top:1001px" width="17" height="17" viewBox="0 0 17 17"><circle cx="8.5" cy="8.5" r="7" fill="#e8d8d0" stroke="#203c90" stroke-width="2.2"/><path d="M2 6 A7 7 0 0 1 5 2.5 L6 8Z" fill="#707070"/><path d="M5 6 L12 6 L7 11 L12 11" stroke="#d04020" stroke-width="2" fill="none"/><circle cx="8.5" cy="8.5" r="2" fill="#e0b020"/></svg>
<svg class="a" style="left:92px;top:1001px" width="18" height="17" viewBox="0 0 18 17"><path d="M5 1 L17 1 L12 16 L1 16Z" fill="#f0a020"/><path d="M5 1 L17 1 L14.5 8 L3 9Z" fill="#40d030"/><path d="M3 9 L14.5 8 L12 16 L1 16Z" fill="#f8e020"/><path d="M14 1 L17 1 L12 16 L9 16Z" fill="#e04010"/><path d="M7 4 L12 4 L9 11Z" fill="#209020"/></svg>
<div class="a" style="left:158px;top:998px;width:2px;height:22px;box-shadow:inset 1px 0 #808080,inset -1px 0 #fff"></div>

<div class="a tb raised" style="left:163px;top:998px;width:162px;height:22px">
<svg class="a" style="left:5px;top:3px" width="16" height="16" viewBox="0 0 16 16"><path d="M1 1 L4 1 L4 5 L12 5 L12 1 L15 1 L15 15 L1 15Z" fill="#1c28c0"/><rect x="3" y="8" width="10" height="6" fill="#f4b0b8"/><rect x="4" y="9" width="8" height="2" fill="#fff"/><rect x="9" y="1" width="2" height="3" fill="#1c28c0"/></svg>
<span style="position:absolute;left:26px;top:0;font-size:10.8px;line-height:23px">Total Commander 7.50 - ...</span></div>
<div class="a tb raised" style="left:326px;top:998px;width:163px;height:22px">
<svg class="a" style="left:5px;top:3px" width="16" height="16" viewBox="0 0 16 16"><path d="M2 1 L12 1 L15 4 L15 15 L2 15Z" fill="#d8e8f8" stroke="#506890" stroke-width="1"/><circle cx="7.5" cy="8" r="5" fill="#4070c8"/><path d="M5 6 L7 10 L8 7 L10 10 L11 5" stroke="#fff" stroke-width="1.3" fill="none"/></svg>
<span style="position:absolute;left:24px;top:0;font-size:10.8px;line-height:23px">ПЗ_3_1 - Microsoft Word</span></div>
<div class="a tb" style="left:489px;top:998px;width:162px;height:22px;background:#ecebe6;box-shadow:inset 1px 1px #404040,inset -1px -1px #fff,inset 2px 2px #808080">
<svg class="a" style="left:7px;top:4px" width="16" height="16" viewBox="0 0 16 16"><rect x="0" y="0" width="16" height="16" fill="#f0e8ff"/><rect x="1" y="1" width="14" height="14" fill="#9a78e8"/><ellipse cx="8" cy="7" rx="4" ry="3" fill="#c04a9a"/><path d="M4 10 L11 13" stroke="#8040a0" stroke-width="1.5"/></svg>
<span style="position:absolute;left:27px;top:1px;font-weight:bold;font-size:11px;line-height:23px;letter-spacing:0.2px">DeepSoil v4.0</span></div>

<div class="a" style="left:1102px;top:998px;width:2px;height:22px;box-shadow:inset 1px 0 #808080,inset -1px 0 #fff"></div>
<div class="a" style="left:1112px;top:1001px;width:14px;height:16px;background:#1e2e80;color:#fff;font-size:10px;line-height:16px;text-align:center;letter-spacing:-0.5px">RU</div>
<div class="a" style="left:1129px;top:998px;width:149px;height:24px;box-shadow:inset 1px 1px #808080,inset -1px -1px #fff"></div>
<svg class="a" style="left:1133px;top:1004px" width="11" height="11" viewBox="0 0 11 11"><path d="M5 1.5 L1.5 5.5 L5 9.5 M9.5 1.5 L6 5.5 L9.5 9.5" stroke="#000" stroke-width="2" fill="none"/></svg>
<svg class="a" style="left:1147px;top:1001px" width="17" height="17" viewBox="0 0 17 17"><path d="M5 1 L12 3 L16 9 L12 16 L4 16 L1 11 L3 5Z" fill="#e8e8f0" stroke="#202020" stroke-width="1.3"/><path d="M2 11 L7 11 L7 15 L4 15Z" fill="#f0c0d0"/><path d="M8 5 L13 7 L11 11 L8 9Z" fill="#b8e8f0"/><path d="M6 3 L6 10 M9 12 L14 12" stroke="#303030" stroke-width="1.2"/></svg>
<svg class="a" style="left:1165px;top:1002px" width="16" height="16" viewBox="0 0 16 16"><circle cx="8" cy="8" r="7" fill="#0a700a"/><path d="M8 0 L10 3 L14 2 L13 6 L16 8 L13 10 L14 14 L10 13 L8 16 L6 13 L2 14 L3 10 L0 8 L3 6 L2 2 L6 3Z" fill="#108a10"/><circle cx="8" cy="8" r="3.2" fill="#22a822"/><circle cx="8" cy="7.5" r="1.3" fill="#b0f040"/></svg>
<svg class="a" style="left:1183px;top:1002px" width="16" height="16" viewBox="0 0 16 16"><circle cx="8" cy="8" r="6.8" fill="#c8ccd4" stroke="#505058" stroke-width="1.6"/><path d="M5 11 L11 5 M8 5 L11 5 L11 8" stroke="#404048" stroke-width="1.6" fill="none"/></svg>
<svg class="a" style="left:1200px;top:1001px" width="16" height="17" viewBox="0 0 16 17"><path d="M1 1 L5 1 L5 6.5 L11 1 L15 1 L8.5 7.5 L10 10 L7 12 L5 9.5 L5 15 L1 15Z" fill="#f01010"/><path d="M8 10 L11 9 L15 13 L12 15Z" fill="#000"/></svg>
<svg class="a" style="left:1219px;top:1001px" width="18" height="18" viewBox="0 0 18 18"><rect x="0.5" y="0.5" width="17" height="17" fill="#fff"/><rect x="1" y="1" width="16" height="2" fill="#707880"/><rect x="1" y="16" width="16" height="2" fill="#606060"/><path d="M2 4 L5.5 14 L9 4" stroke="#108a30" stroke-width="2.6" fill="none"/><path d="M10 7 Q12 4.5 14 6.5 Q14.5 8.5 10.5 13 L15.5 13" stroke="#e05070" stroke-width="1.6" fill="none"/></svg>
<div class="a" style="left:1240px;top:998px;width:34px;height:24px;line-height:24px;text-align:center;font-size:11px">17:25</div>
</div>
</body></html>
